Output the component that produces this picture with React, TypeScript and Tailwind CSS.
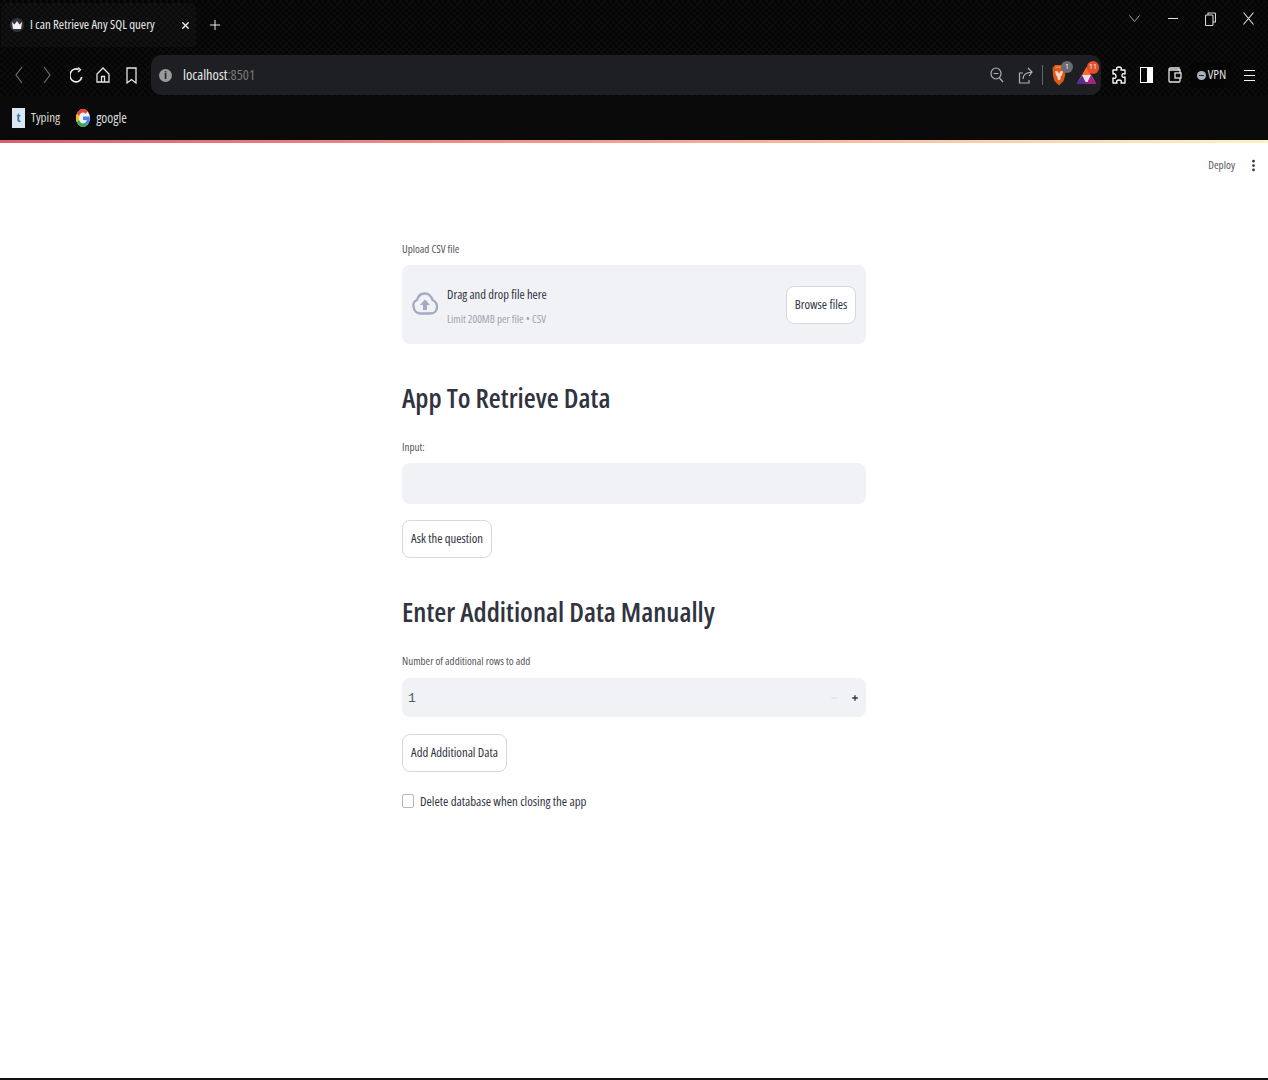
import React from "react";
import { Minus, Plus, X, EllipsisVertical } from "lucide-react";

function Brave() {
  return (
    <svg width="14" height="22" viewBox="0 0 14 22">
      <path d="M3 1h8l2.500 3L13 12l-1.500 5L7 21.500 2.500 17 1 12 .5 4z" fill="#dd5a1e" />
      <path d="M3 7l3 .5L7 10l1-2.500L11 7l-1 4-1.500 2v2L7 16.500 5.500 15v-2L4 11z" fill="#f8d8c2" />
      <path d="M4 2.500h6l1 1.500H3z" fill="#f08a4a" />
    </svg>
  );
}

function Bat() {
  return (
    <svg width="21" height="19" viewBox="0 0 21 19">
      <path d="M10.500 1l10 17H.5z" fill="#9e1f63" />
      <path d="M10.500 1l4.500 8H6z" fill="#ff6a2a" />
      <path d="M6 9h9l4 7H2z" fill="#e8dce8" />
      <path d="M.5 18L6 9l4.500 9z" fill="#5b2c91" />
      <path d="M20.500 18L15 9l-4.500 9z" fill="#a0267f" />
    </svg>
  );
}

function Google() {
  return (
    <svg width="14" height="18" viewBox="0 0 48 48" preserveAspectRatio="none">
      <circle cx="24" cy="24" r="24" fill="#f2f2f2" />
      <path fill="#EA4335" d="M24 9.500c3.500 0 6.700 1.200 9.200 3.600l6.900-6.900C35.900 2.400 30.500 0 24 0 14.600 0 6.500 5.400 2.600 13.200l8 6.200C12.400 13.700 17.700 9.500 24 9.500z" />
      <path fill="#4285F4" d="M46.900 24.500c0-1.600-.1-3.100-.4-4.500H24v9h12.900c-.6 3-2.200 5.500-4.800 7.200l7.700 6c4.500-4.200 7.100-10.300 7.100-17.700z" />
      <path fill="#FBBC05" d="M10.500 28.600A14.500 14.500 0 0 1 10.500 19.400l-8-6.200a24 24 0 0 0 0 21.600z" />
      <path fill="#34A853" d="M24 48c6.500 0 11.900-2.100 15.900-5.800l-7.700-6c-2.200 1.500-5 2.300-8.200 2.300-6.300 0-11.600-4.200-13.500-9.900l-8 6.200C6.500 42.600 14.600 48 24 48z" />
    </svg>
  );
}

function Crown() {
  return (
    <div className="w-[14px] h-[14px] rounded-full bg-[#33333d] flex items-center justify-center">
      <svg width="10" height="8" viewBox="0 0 10 8"><path d="M0 1l2.500 2.500L5 0l2.500 3.500L10 1 9 8H1z" fill="#f3f3f3" /></svg>
    </div>
  );
}

function Chevron({ flip }: { flip?: boolean }) {
  return (
    <svg width="8" height="18" viewBox="0 0 8 18" fill="none" stroke="#6f6f6f" strokeWidth="1.200" className={flip ? "-scale-x-100" : ""}>
      <path d="M7 1L1 9l6 8" />
    </svg>
  );
}

function Reload() {
  return (
    <svg width="13" height="17" viewBox="0 0 13 17" fill="none" stroke="#f0f0f0" strokeWidth="1.600">
      <path d="M8.500 2.500A6 6.500 0 1 0 11.800 10" />
      <path d="M8 .5l2.500 2.300L8 5" strokeWidth="1.300" />
    </svg>
  );
}

function HomeIcon() {
  return (
    <svg width="14" height="16" viewBox="0 0 14 16" fill="none" stroke="#e4e4e4" strokeWidth="1.300">
      <path d="M1 7l6-6 6 6v8H1z" />
      <path d="M5.500 15V9.500h3V15" />
    </svg>
  );
}

function BookmarkIcon() {
  return (
    <svg width="11" height="17" viewBox="0 0 11 17" fill="none" stroke="#e4e4e4" strokeWidth="1.300">
      <path d="M1 1h9v15l-4.500-3.500L1 16z" />
    </svg>
  );
}

function Zoom() {
  return (
    <svg width="14" height="16" viewBox="0 0 14 16" fill="none" stroke="#b0b0b0" strokeWidth="1.200">
      <ellipse cx="6" cy="6.500" rx="5" ry="5.500" />
      <path d="M9.500 11l3.500 4M3.500 6.500h5" />
    </svg>
  );
}

function ShareIcon() {
  return (
    <svg width="15" height="17" viewBox="0 0 15 17" fill="none" stroke="#b0b0b0" strokeWidth="1.200">
      <path d="M5 6H1.500v10H11v-3" />
      <path d="M5 12c0-4 3-6.500 9-7M10 1l4 4-3 4" />
    </svg>
  );
}

function PuzzleIcon() {
  return (
    <svg width="14" height="18" viewBox="0 0 14 18" fill="none" stroke="#f4f4f4" strokeWidth="1.400" strokeLinejoin="round">
      <path d="M5 4c-1-2 0-3 2-3s3 1 2 3h4v4c-2-1-3 0-3 1.500S11 12 13 11v6H9c1-2 0-3-2-3s-3 1-2 3H1v-5c2 1 3 0 3-1.500S3 7 1 8V4z" />
    </svg>
  );
}

function WalletIcon() {
  return (
    <svg width="14" height="16" viewBox="0 0 14 16" fill="none" stroke="#e4e4e4" strokeWidth="1.300">
      <path d="M11 3V1H2.500A1.500 1.500 0 0 0 1 2.500V14a1 1 0 0 0 1 1h9a1 1 0 0 0 1-1v-3" />
      <path d="M1 3h11v3" />
      <rect x="7" y="6" width="6" height="5" />
    </svg>
  );
}

function Restore() {
  return (
    <svg width="11" height="14" viewBox="0 0 11 14" fill="none" stroke="#d8d8d8" strokeWidth="1.100">
      <rect x=".5" y="3" width="7.500" height="10.500" rx="1" />
      <path d="M3 3V1h6.500a1 1 0 0 1 1 1v8H8" />
    </svg>
  );
}

function ThinX() {
  return (
    <svg width="11" height="13" viewBox="0 0 11 13" fill="none" stroke="#e4e4e4" strokeWidth="1.100">
      <path d="M.5.5l10 12M10.500.5l-10 12" />
    </svg>
  );
}

function CloudUp() {
  return (
    <svg width="26" height="27" viewBox="0 0 26 27" fill="none">
      <path d="M13 2.500c-4 0-7 2.500-8 6.500-2.500 1-4 3.500-3.500 6.500.5 4 3 7 6.500 7h10.500c4 0 6.500-3 6.500-6.500 0-3-2-6-4.500-7-1-3.500-4-6.500-7.500-6.500z" stroke="#a2abc2" strokeWidth="2.300" strokeLinejoin="round" />
      <path d="M13 8.500l5 5.500h-3v5h-4v-5H8z" fill="#a2abc2" />
    </svg>
  );
}

function Button({ label, w }: { label: string; w: string }) {
  return (
    <div className={`${w} h-[38px] bg-white border border-[#d6d8de] rounded-lg flex items-center justify-center text-[12.7px] text-[#31333f] font-stretch-condensed whitespace-nowrap`}>
      {label}
    </div>
  );
}

export default function App() {
  return (
    <div className="w-[1268px] h-[1080px] flex flex-col bg-[#090909] font-['Open_Sans','Noto_Sans',sans-serif] overflow-hidden">
      {/* tab strip */}
      <div className="h-[54px] flex items-start justify-between bg-[repeating-conic-gradient(#0c0c0c_0_25%,#050505_0_50%)] bg-size-[6px_6px]">
        <div className="flex items-center h-[47px]">
          <div className="w-[195px] h-[44px] ml-[1px] mt-[3px] pl-[9px] rounded-t-lg bg-[repeating-conic-gradient(#121213_0_25%,#0b0b0c_0_50%)] bg-size-[6px_6px] flex items-center">
            <Crown />
            <span className="ml-[6px] text-[12.8px] text-[#e8e8e8] font-stretch-condensed whitespace-nowrap">I can Retrieve Any SQL query</span>
            <X size={11} strokeWidth={3} className="ml-auto mr-[5px] text-[#f0f0f0]" />
          </div>
          <Plus size={16} strokeWidth={1.5} className="ml-[11px] mt-[3px] text-[#eeeeee]" />
        </div>
        <div className="flex items-center h-[37px] pr-[14px]">
          <svg width="11" height="7" viewBox="0 0 11 7" fill="none" stroke="#a0a0a0" strokeWidth="1"><path d="M.5.5l5 6 5-6" /></svg>
          <div className="ml-[28px] w-[10px] h-px bg-[#e0e0e0]" />
          <div className="ml-[27px] flex"><Restore /></div>
          <div className="ml-[27px] flex"><ThinX /></div>
        </div>
      </div>
      {/* address row */}
      <div className="h-[42px] flex items-center bg-[repeating-conic-gradient(#0c0c0c_0_25%,#050505_0_50%)] bg-size-[6px_6px]">
        <div className="ml-[15px] flex"><Chevron /></div>
        <div className="ml-[20px] flex"><Chevron flip /></div>
        <div className="ml-[19px] flex"><Reload /></div>
        <div className="ml-[13px] flex"><HomeIcon /></div>
        <div className="ml-[16px] flex"><BookmarkIcon /></div>
        <div className="ml-[14px] w-[950px] h-[40px] bg-[#1e1f22] rounded-[10px] flex items-center">
          <div className="ml-[8px] w-[13px] h-[13px] rounded-full bg-[#9a9a9a] flex items-center justify-center text-[10px] font-bold text-[#202125]">i</div>
          <span className="ml-[11px] text-[14.4px] text-[#e8e8e8] font-stretch-condensed">localhost<span className="text-[#777777]">:8501</span></span>
          <div className="ml-auto flex"><Zoom /></div>
          <div className="ml-[14px] flex"><ShareIcon /></div>
          <div className="ml-[9px] w-px h-[20px] bg-[#666666]" />
          <div className="ml-[9px] relative flex"><Brave /><span className="absolute -right-[7px] -top-[3px] w-[12px] h-[12px] rounded-full bg-[#6b6b74] text-[7px] text-white flex items-center justify-center">1</span></div>
          <div className="ml-[10px] mr-[4px] relative flex"><Bat /><span className="absolute -right-[2px] -top-[5px] w-[12px] h-[13px] rounded-full bg-[#e2502c] text-[7px] text-white flex items-center justify-center">11</span></div>
        </div>
        <div className="ml-[11px] flex"><PuzzleIcon /></div>
        <div className="ml-[14px] w-[13px] h-[16px] border-[1.500px] border-white flex justify-end"><div className="w-[5px] bg-white" /></div>
        <div className="ml-[15px] flex"><WalletIcon /></div>
        <div className="ml-[9px] w-[41px] h-[26px] rounded bg-[#050505] flex items-center justify-center gap-[2px]">
          <div className="w-[9px] h-[9px] rounded-full bg-[#a9b0c0] flex items-center justify-center"><div className="w-[5px] h-px bg-[#222222]" /></div>
          <span className="text-[13px] text-[#dddddd] font-stretch-condensed">VPN</span>
        </div>
        <div className="ml-[12px] w-[11px] h-[11px] flex flex-col justify-between">
          <div className="h-px bg-[#f0f0f0]" />
          <div className="h-px bg-[#f0f0f0]" />
          <div className="h-px bg-[#f0f0f0]" />
        </div>
      </div>
      {/* bookmarks */}
      <div className="h-[44px] flex items-center text-[13px] text-[#dddddd] font-stretch-condensed bg-[#0a0a0a]">
        <div className="ml-[12px] w-[13px] h-[20px] bg-[#dbe8f2] flex items-center justify-center text-[13px] font-bold text-[#2f7ba8]">t</div>
        <span className="ml-[6px]">Typing</span>
        <div className="ml-[16px] flex"><Google /></div>
        <span className="ml-[6px] text-[13.500px]">google</span>
      </div>
      <div className="h-[3px] bg-gradient-to-r from-[#d9606a] via-[#f0a090] to-[#fbf3c4]" />
      {/* page */}
      <div className="flex-1 bg-white flex flex-col text-[#31333f]">
        <div className="h-[45px] flex items-center justify-end pr-[7px]">
          <span className="text-[11.2px] font-stretch-condensed text-[#555761]">Deploy</span>
          <EllipsisVertical size={15} strokeWidth={2.4} className="ml-[11px] text-[#31333f]" />
        </div>
        <div className="w-[464px] mx-auto mt-[54px] font-stretch-condensed">
          <div className="h-[14px] flex items-center text-[11px] text-[#555761]">Upload CSV file</div>
          <div className="mt-[9px] h-[79px] bg-[#f0f2f6] rounded-lg flex items-center px-[10px]">
            <CloudUp />
            <div className="ml-[9px] pt-[3px] flex flex-col">
              <span className="text-[12.5px] leading-[18px] text-[#31333f]">Drag and drop file here</span>
              <span className="mt-[8px] text-[11px] leading-[14px] text-[#a0a3ad]">Limit 200MB per file • CSV</span>
            </div>
            <div className="ml-auto"><Button label="Browse files" w="w-[70px]" /></div>
          </div>
          <h1 className="mt-[32px] h-[44px] flex items-center text-[27.5px] font-semibold text-[#31333f]">App To Retrieve Data</h1>
          <div className="mt-[20px] h-[14px] flex items-center text-[11px] text-[#555761]">Input:</div>
          <div className="mt-[9px] h-[41px] bg-[#f0f2f6] rounded-lg" />
          <div className="mt-[16px]"><Button label="Ask the question" w="w-[90px]" /></div>
          <h1 className="mt-[32px] h-[44px] flex items-center text-[27.5px] font-semibold text-[#31333f]">Enter Additional Data Manually</h1>
          <div className="mt-[20px] h-[14px] flex items-center text-[11px] text-[#555761]">Number of additional rows to add</div>
          <div className="mt-[10px] h-[39px] bg-[#f0f2f6] rounded-lg flex items-center px-[6px] text-[13px]">
            <span className="mt-[2px] font-['Liberation_Mono',monospace] text-[#555761]">1</span>
            <Minus size={8} strokeWidth={2} className="ml-auto text-[#d0d2d8]" />
            <Plus size={8} strokeWidth={4} className="ml-[13px] mr-[1px] text-[#31333f]" />
          </div>
          <div className="mt-[17px]"><Button label="Add Additional Data" w="w-[105px]" /></div>
          <div className="mt-[21px] flex items-center">
            <div className="w-[12px] h-[14px] bg-white border border-[#b5b8c0] rounded-[2px]" />
            <span className="ml-[6px] text-[12.8px] leading-[16px]">Delete database when closing the app</span>
          </div>
        </div>
      </div>
      <div className="h-[2px] bg-[#111111]" />
    </div>
  );
}
